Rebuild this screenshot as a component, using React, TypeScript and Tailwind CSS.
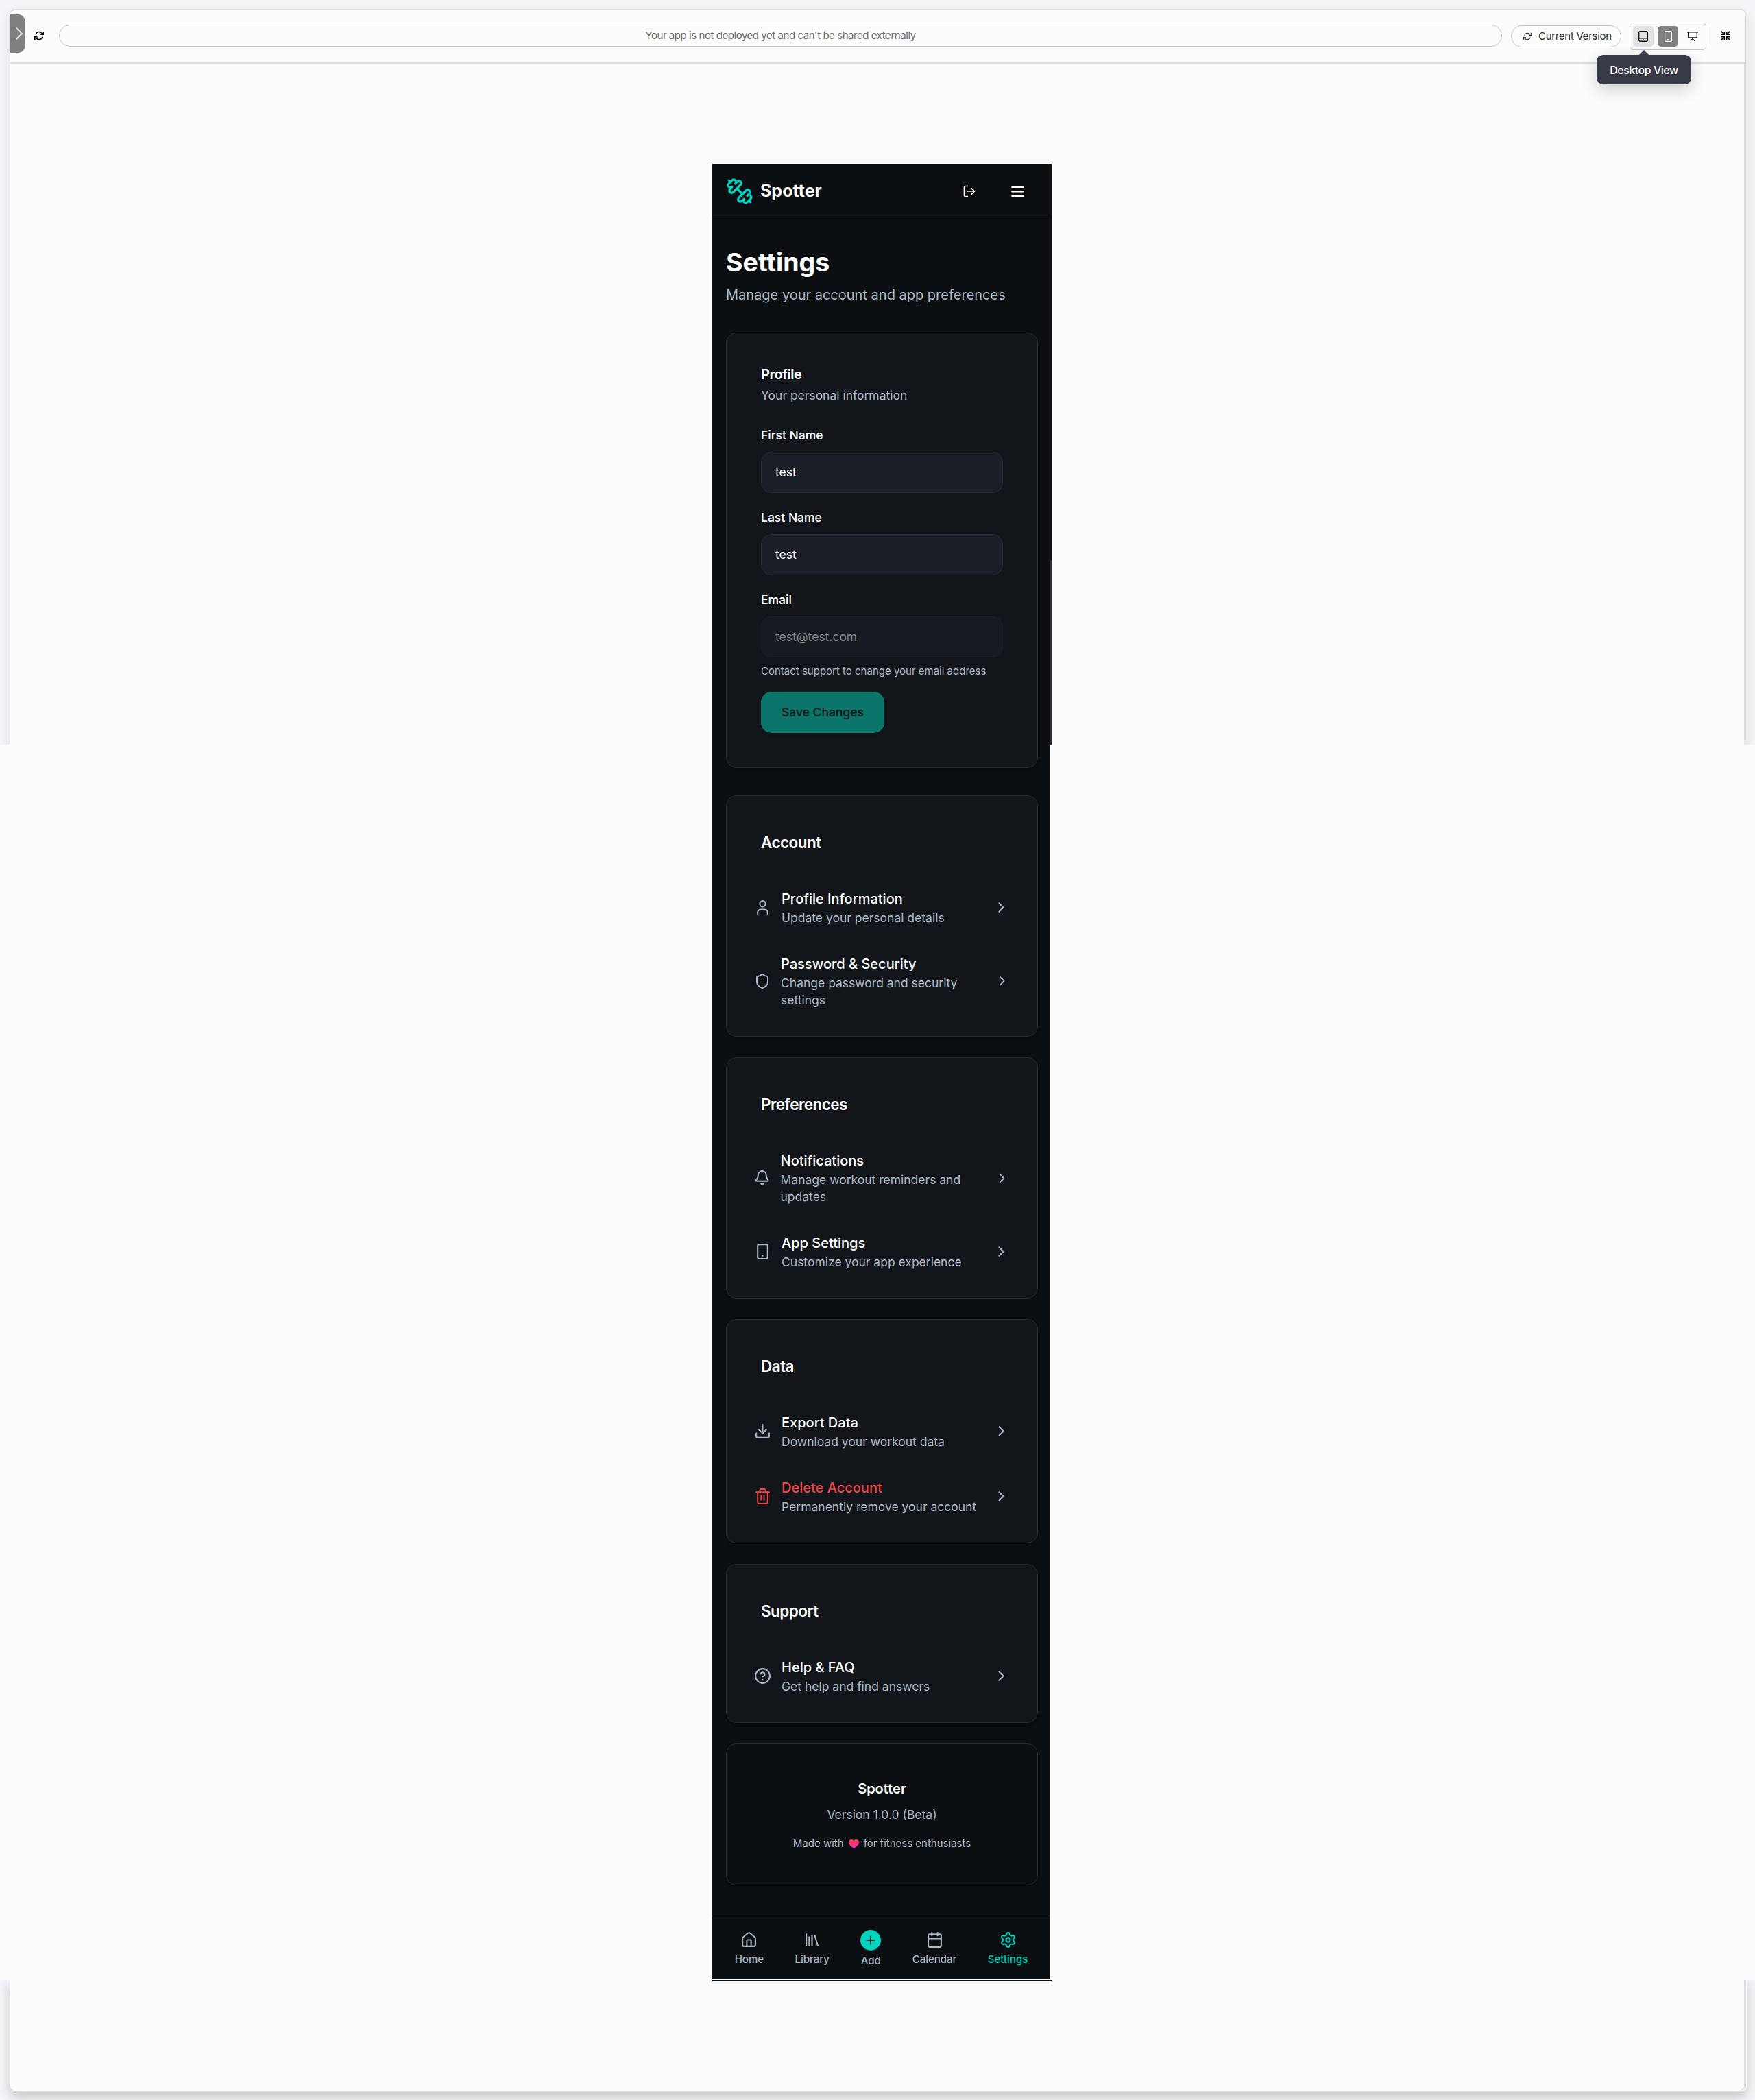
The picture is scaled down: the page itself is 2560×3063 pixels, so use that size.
import React from "react";
import {
  Bell,
  Calendar,
  ChevronRight,
  CircleHelp,
  Download,
  House,
  Library,
  LogOut,
  Plus,
  Settings,
  Shield,
  Smartphone,
  Trash2,
  User,
} from "lucide-react";

function Sync({ size, weight }: { size: number; weight: number }) {
  return (
    <svg width={size} height={size} viewBox="0 0 14 14" fill="none" stroke="currentColor" strokeWidth={weight}>
      <path d="M2 5.2C3 2.7 5 1.5 7 1.5c2.1 0 3.6.9 4.9 2.5" />
      <path d="M12 8.8c-1 2.5-3 3.7-5 3.7-2.1 0-3.600-.9-4.900-2.500" />
      <path d="M13.2 1v4.200H9.400M.8 13V8.800h3.800" />
    </svg>
  );
}

function DumbbellLogo() {
  return (
    <svg
      className="size-10 text-[#00d4be]"
      viewBox="0 0 24 24"
      fill="none"
      stroke="currentColor"
      strokeWidth="2"
      strokeLinecap="round"
      strokeLinejoin="round"
    >
      <path d="M14.4 14.4 9.6 9.6" />
      <path d="M18.657 21.485a2 2 0 1 1-2.829-2.828l-1.767 1.768a2 2 0 1 1-2.829-2.829l6.364-6.364a2 2 0 1 1 2.829 2.829l-1.768 1.767a2 2 0 1 1 2.828 2.829z" />
      <path d="m21.5 21.5-1.4-1.4" />
      <path d="M3.9 3.9 2.5 2.5" />
      <path d="M6.404 12.768a2 2 0 1 1-2.829-2.829l1.768-1.767a2 2 0 1 1-2.828-2.829l2.828-2.828a2 2 0 1 1 2.829 2.828l1.767-1.768a2 2 0 1 1 2.829 2.829z" />
    </svg>
  );
}

function TopBar() {
  return (
    <header className="flex h-[78px] items-start border-b-2 border-[#e0e0e0] pt-px">
      <div className="mt-[5px] flex h-14 w-[22px] items-center justify-center rounded-r-[11px] bg-[#808080] pl-1">
        <svg width="12" height="20" viewBox="0 0 12 20" fill="none" stroke="#dcdcdc" strokeWidth="2.2" strokeLinecap="round" strokeLinejoin="round">
          <path d="M2 2l8 8-8 8" />
        </svg>
      </div>
      <div className="mt-[29px] ml-[13px] text-black">
        <Sync size={14} weight={1.7} />
      </div>
      <div className="mt-5 ml-[22px] flex h-8 w-[2105px] items-center justify-center rounded-full border border-[#c6c6c6] text-[15px] tracking-[-0.45px] text-[#6b6b6b]">
        Your app is not deployed yet and can't be shared externally
      </div>
      <div className="mt-[21px] ml-[13px] flex h-8 w-[161px] items-center rounded-full border border-[#c6c6c6] pl-[17px] text-[#2e2e2e]">
        <Sync size={12} weight={1.3} />
        <span className="ml-2.5 text-[15px] tracking-[-0.3px] whitespace-nowrap">Current Version</span>
      </div>
      <div className="relative mt-[17px] ml-3 flex h-10 w-28 items-center gap-1.5 rounded-[5px] border border-[#c6c6c6] pl-1">
        <div className="flex size-[30px] items-center justify-center rounded-[5px] bg-[#e2e2e2]">
          <svg width="14" height="16" viewBox="0 0 14 16" fill="none" stroke="#111" strokeWidth="1.4">
            <rect x="0.7" y="0.7" width="12.6" height="14.6" rx="1.8" />
            <path d="M1 10.8h12" />
            <path d="M6 13.2h2" />
          </svg>
        </div>
        <div className="flex size-[30px] items-center justify-center rounded-[5px] bg-[#808080]">
          <svg width="11" height="16" viewBox="0 0 11 16" fill="none" stroke="#fff" strokeWidth="1.2">
            <rect x="0.6" y="0.6" width="9.8" height="14.8" rx="1.6" />
            <path d="M4 12.8h3" />
          </svg>
        </div>
        <div className="flex size-[30px] items-center justify-center">
          <svg width="16" height="14" viewBox="0 0 16 14" fill="none" stroke="#111" strokeWidth="1.3">
            <path d="M0 .9h16M1.7 1v8h12.6V1M8 9v2M5 13.6L8 10.6l3 3" />
          </svg>
        </div>
        <div className="absolute top-[46px] left-[-49px] flex h-[43px] w-[138px] items-center justify-center rounded-[9px] bg-[#383b46] text-[16px] font-medium tracking-[-0.5px] whitespace-nowrap text-white shadow-[0_8px_24px_rgba(0,0,0,0.18)]">
          <span className="absolute -top-[5px] left-[64px] size-[10px] rotate-45 bg-[#383b46]" />
          <span className="relative">Desktop View</span>
        </div>
      </div>
      <div className="mt-[29px] ml-[21px]">
        <svg width="14" height="14" viewBox="0 0 14 14" fill="none" stroke="#000" strokeWidth="1.6">
          <path d="M.6.6l4.2 4.2M13.4.6L9.2 4.800M.6 13.4l4.2-4.2M13.4 13.4L9.200 9.200" />
          <path d="M1 5.300h4.300V1M13 5.300H8.700V1M1 8.700h4.300V13M13 8.700H8.700V13" />
        </svg>
      </div>
    </header>
  );
}

function BrowserFrame() {
  return (
    <div className="col-start-1 row-start-1 flex h-[3063px] flex-col bg-[#fcfcfc]">
      <div className="h-[1086px] overflow-hidden bg-[#f4f5f8] pt-[13px] pl-[14px]">
        <div className="h-[1300px] w-[2533px] rounded-t-[8px] border border-t-2 border-[#dedfe1] bg-[#fcfcfc] shadow-[0_8px_16px_rgba(0,0,0,0.1)]">
          <TopBar />
          <div className="mr-[1px] h-[1200px] border-r border-[#e0e0e0]" />
        </div>
      </div>
      <div className="h-[1802px]" />
      <div className="flex h-[175px] items-start overflow-hidden bg-[#f4f5f8] pl-[14px]">
        <div className="h-[164px] w-[2534px] rounded-b-[9px] bg-[#fcfcfc] pr-[1px] pb-[1px] shadow-[0_6px_16px_rgba(0,0,0,0.2)]">
          <div className="h-[163px] rounded-b-[8px] border-r border-b border-l border-[#dedfe1] pr-[1px] pb-[1px]">
            <div className="h-[161px] rounded-b-[6px] border-r border-b border-[#dedfe1]" />
          </div>
        </div>
      </div>
    </div>
  );
}

function Field({ label, value, disabled }: { label: string; value: string; disabled?: boolean }) {
  return (
    <div>
      <div className="h-[35px] text-[17.5px] leading-[21px] font-medium">{label}</div>
      <div
        className={
          disabled
            ? "flex h-[60px] items-center rounded-[15px] border border-[#1c2025] bg-[#161a21] px-[20px] text-[17.5px] text-[#85878a]"
            : "flex h-[60px] items-center rounded-[15px] border border-[#272a2f] bg-[#1a1e26] px-[20px] text-[17.5px] text-white"
        }
      >
        {value}
      </div>
    </div>
  );
}

function ProfileCard() {
  return (
    <section className="h-[635px] rounded-[15px] border border-[#25292d] bg-[#12151a] px-[50px] pt-[50px] shadow-[0_2px_4px_rgba(0,0,0,0.3)]">
      <h2 className="text-[20px] leading-[20px] font-semibold tracking-[-0.5px]">Profile</h2>
      <p className="mt-[8px] text-[17.5px] leading-[25px] text-[#acb8c5]">Your personal information</p>
      <div className="mt-[35px] flex flex-col gap-[25px]">
        <Field label="First Name" value="test" />
        <Field label="Last Name" value="test" />
        <Field label="Email" value="test@test.com" disabled />
      </div>
      <p className="mt-[10px] text-[15px] leading-[20px] text-[#acb8c5]">Contact support to change your email address</p>
      <button className="mt-[20px] flex h-[60px] w-[180px] items-center justify-center rounded-[15px] bg-[#0b756c] text-[17.5px] font-medium text-[#0c1417] shadow-[0_2px_4px_rgba(0,0,0,0.3)]">
        Save Changes
      </button>
    </section>
  );
}

type RowProps = {
  icon: React.ComponentType<{ className?: string; size?: number }>;
  iconSize?: number;
  chevronSize?: number;
  title: string;
  text: string;
  danger?: boolean;
};

function Row({ icon: Icon, iconSize = 25, chevronSize = 25, title, text, danger }: RowProps) {
  return (
    <div className="flex items-center px-[20px] py-[20px]">
      <Icon size={iconSize} className={danger ? "shrink-0 text-[#ef4343]" : "shrink-0 text-[#acb8c5]"} />
      <div className="ml-[15px] w-[290px]">
        <div className={danger ? "text-[20px] leading-[30px] font-medium text-[#ef4343]" : "text-[20px] leading-[30px] font-medium"}>{title}</div>
        <div className="text-[17.5px] leading-[25px] text-[#acb8c5]">{text}</div>
      </div>
      <ChevronRight size={chevronSize} className="ml-auto shrink-0 text-[#acb8c5]" />
    </div>
  );
}

function Group({ title, children }: { title: string; children: React.ReactNode }) {
  return (
    <section className="rounded-[15px] border border-[#25292d] bg-[#12151a] px-[20px] pb-[20px] shadow-[0_2px_4px_rgba(0,0,0,0.3)]">
      <h2 className="h-[115px] pt-[50px] pl-[30px] text-[22.5px] leading-[35px] font-semibold tracking-[-0.56px]">{title}</h2>
      {children}
    </section>
  );
}

function Heart() {
  return (
    <svg className="mx-[7px]" width="15" height="13" viewBox="0 0 15 13">
      <defs>
        <linearGradient id="heart" x1="0" y1="0" x2="0.3" y2="1">
          <stop offset="0.2" stopColor="#f8404f" />
          <stop offset="1" stopColor="#f02fb0" />
        </linearGradient>
      </defs>
      <path fill="url(#heart)" d="M7.500 13C5 11.500 0 8 0 4 0 1.500 1.800 0 4 0c1.500 0 2.800.7 3.500 1.900C8.200.7 9.500 0 11 0c2.200 0 4 1.500 4 4 0 4-5 7.500-7.500 9z" />
    </svg>
  );
}

function NavItem({ icon: Icon, label, active }: { icon: React.ComponentType<{ size?: number }>; label: string; active?: boolean }) {
  return (
    <div className={active ? "flex flex-col items-center gap-[6px] px-[10px] text-[#00d4be]" : "flex flex-col items-center gap-[6px] px-[10px] text-[#acb8c5]"}>
      <Icon size={25} />
      <span className="text-[15px] leading-[20px] font-medium">{label}</span>
    </div>
  );
}

function Phone() {
  return (
    <div className="z-10 col-start-1 row-start-1 mt-[239px] ml-[1039px] grid h-[2651px] w-[495px] self-start font-['Inter',sans-serif] text-white">
      <div className="col-start-1 row-start-1 flex h-[2651px] flex-col">
        <div className="flex h-[847px] flex-col items-end justify-end bg-[#0b0f12]">
          <div className="h-[269px] w-[2px] rounded-t-[2px] bg-[#2c2f37]" />
        </div>
        <div className="h-[1801px] w-[493px] bg-[#0b0f12]" />
        <div className="h-[1px] bg-white" />
        <div className="h-[2px] bg-[#0b0f12]" />
      </div>
      <div className="col-start-1 row-start-1 flex h-[2648px] flex-col">
        <div className="flex h-[81px] w-[493px] items-center border-b border-[#2a2e32] pl-[20px]">
          <DumbbellLogo />
          <span className="ml-[10px] text-[25px] font-bold">Spotter</span>
          <LogOut size={20} className="ml-auto" />
          <svg className="mr-[35px] ml-[48px]" width="25" height="25" viewBox="0 0 24 24" fill="none" stroke="currentColor" strokeWidth="2" strokeLinecap="round">
            <path d="M4 5.700h16M4 12h16M4 18.300h16" />
          </svg>
        </div>
        <main className="flex flex-col px-[20px] pt-[40px]">
          <h1 className="text-[37.5px] leading-[45px] font-bold">Settings</h1>
          <p className="mt-[10px] mb-[40px] text-[20px] leading-[30px] text-[#acb8c5]">Manage your account and app preferences</p>
          <ProfileCard />
          <div className="mt-[40px] flex flex-col gap-[30px]">
            <Group title="Account">
              <Row icon={User} title="Profile Information" text="Update your personal details" />
              <Row icon={Shield} iconSize={24} chevronSize={23.5} title="Password & Security" text="Change password and security settings" />
            </Group>
            <Group title="Preferences">
              <Row icon={Bell} iconSize={23.5} chevronSize={23} title="Notifications" text="Manage workout reminders and updates" />
              <Row icon={Smartphone} title="App Settings" text="Customize your app experience" />
            </Group>
            <Group title="Data">
              <Row icon={Download} title="Export Data" text="Download your workout data" />
              <Row icon={Trash2} title="Delete Account" text="Permanently remove your account" danger />
            </Group>
            <Group title="Support">
              <Row icon={CircleHelp} title="Help & FAQ" text="Get help and find answers" />
            </Group>
            <section className="flex h-[207px] flex-col items-center rounded-[15px] border border-[#25292d] pt-[50px] shadow-[0_2px_4px_rgba(0,0,0,0.3)]">
              <h3 className="text-[20px] leading-[30px] font-semibold">Spotter</h3>
              <p className="mt-[10px] text-[17.5px] leading-[25px] text-[#acb8c5]">Version 1.0.0 (Beta)</p>
              <p className="mt-[20px] flex items-center text-[15px] leading-[20px] text-[#acb8c5]">
                Made with <Heart /> for fitness enthusiasts
              </p>
            </section>
          </div>
        </main>
        <nav className="mt-auto flex h-[93px] w-[493px] items-start justify-around border-t border-[#2a2e32] px-[10px] pt-[20px]">
          <div className="mt-[2px]">
            <NavItem icon={House} label="Home" />
          </div>
          <div className="mt-[2px]">
            <NavItem icon={Library} label="Library" />
          </div>
          <div className="flex flex-col items-center gap-[5px] px-[10px] text-[#acb8c5]">
            <div className="flex size-[30px] items-center justify-center rounded-full bg-[#00d4be] text-[#0b0f12]">
              <Plus size={20} />
            </div>
            <span className="text-[15px] leading-[20px] font-medium">Add</span>
          </div>
          <div className="mt-[2px]">
            <NavItem icon={Calendar} label="Calendar" />
          </div>
          <div className="mt-[2px]">
            <NavItem icon={Settings} label="Settings" active />
          </div>
        </nav>
      </div>
    </div>
  );
}

export default function App() {
  return (
    <div className="grid h-[3063px] w-[2560px] grid-cols-1 overflow-hidden font-['Inter',sans-serif]">
      <BrowserFrame />
      <Phone />
    </div>
  );
}
